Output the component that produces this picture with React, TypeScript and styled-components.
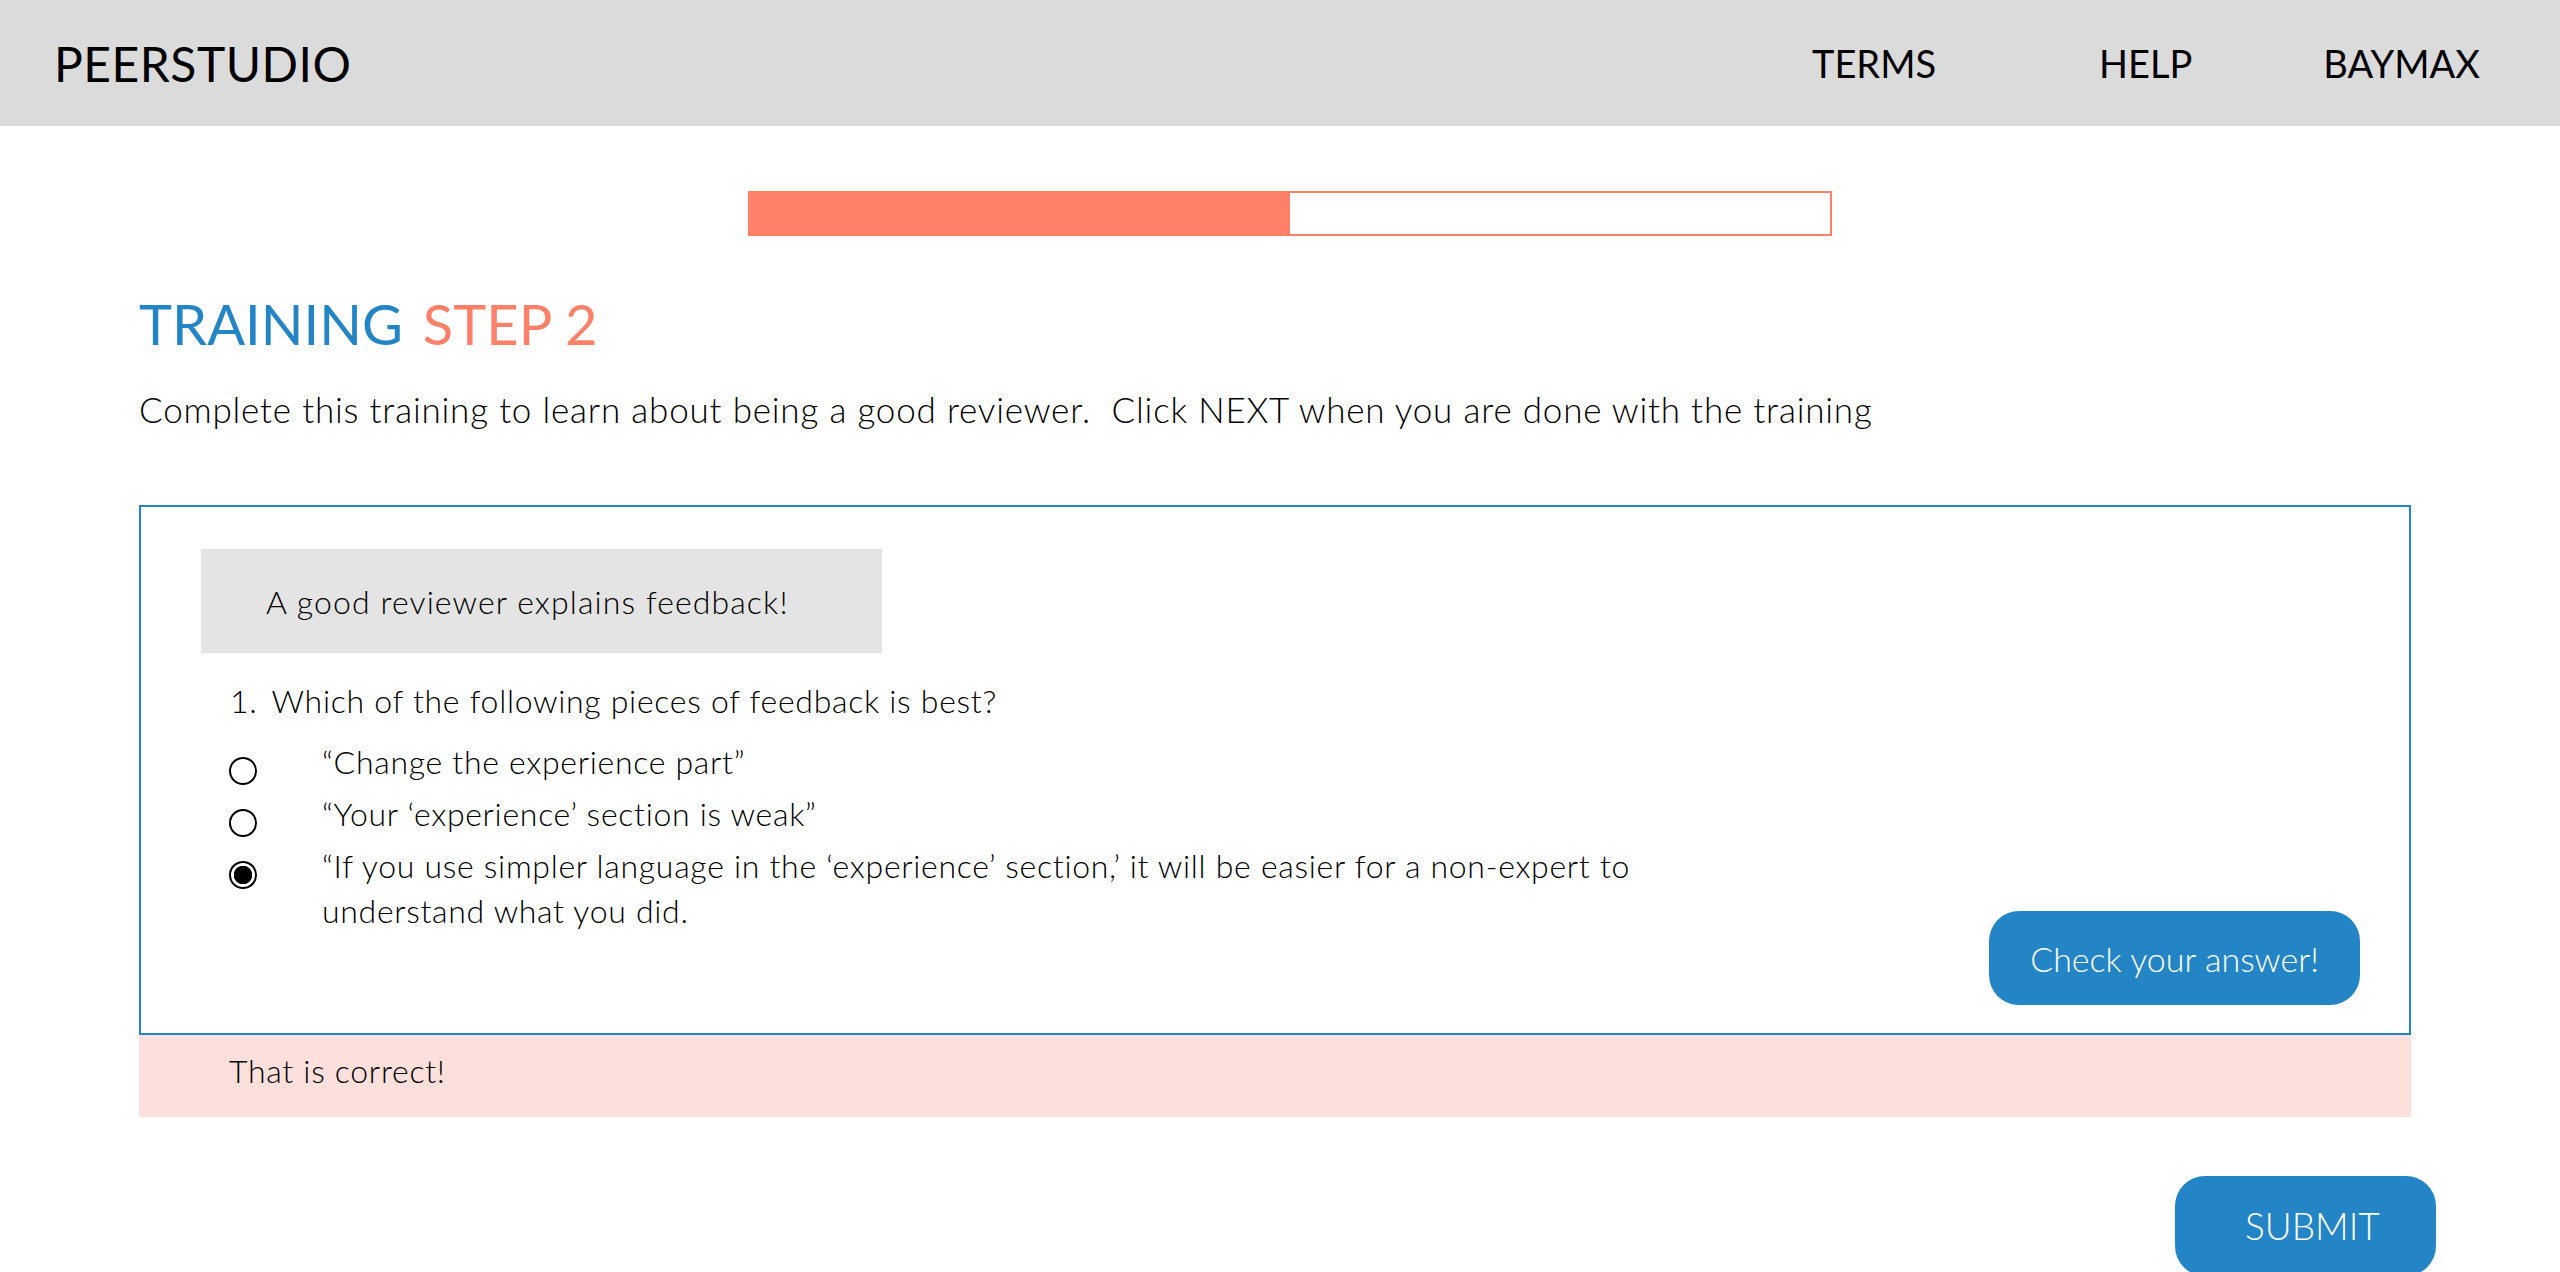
import React from "react";
import styled, { createGlobalStyle } from "styled-components";

const BLUE = "#2385c6";
const SALMON = "#ff8068";

const GlobalStyle = createGlobalStyle`
  html, body {
    margin: 0;
    padding: 0;
    background: #ffffff;
    font-family: "Lato", "Liberation Sans", sans-serif;
    color: #000;
  }
  * { box-sizing: border-box; }
`;

const Page = styled.div`
  width: 2560px;
  min-height: 1272px;
  display: flex;
  flex-direction: column;
`;

const TopBar = styled.header`
  height: 126px;
  background: #dbdbdb;
  display: flex;
  align-items: center;
  justify-content: space-between;
  padding: 0 80px 0 54px;
`;

const Brand = styled.div`
  font-family: "Lato", sans-serif;
  font-weight: 400;
  font-size: 48px;
  letter-spacing: 0.5px;
`;

const Nav = styled.nav`
  display: flex;
  align-items: center;
`;

const NavItem = styled.a<{ $space: number }>`
  font-family: "Lato", sans-serif;
  font-weight: 400;
  font-size: 38px;
  color: #000;
  text-decoration: none;
  margin-left: ${(p) => p.$space}px;
`;

const Main = styled.main`
  display: flex;
  flex-direction: column;
  padding: 65px 124px 0 139px;
`;

const Progress = styled.div`
  width: 1084px;
  height: 45px;
  margin-left: 609px;
  border: 2px solid ${SALMON};
  display: flex;
`;

const ProgressFill = styled.div`
  background: ${SALMON};
  height: 100%;
`;

const Title = styled.h1`
  margin: 54px 0 0;
  font-size: 56px;
  font-weight: 400;
  line-height: 1.2;
  display: flex;
`;

const TitleWord = styled.span<{ $color: string; $gap?: number }>`
  color: ${(p) => p.$color};
  margin-left: ${(p) => p.$gap ?? 0}px;
`;

const Lead = styled.p`
  margin: 31px 0 0;
  font-size: 35px;
  font-weight: 300;
  line-height: 1.2;
  letter-spacing: 0.8px;
`;

const Card = styled.section`
  margin: 75px 25px 0 0;
  border: 2px solid ${BLUE};
  padding: 42px 49px 28px 60px;
  display: flex;
  flex-direction: column;
  align-items: flex-start;
`;

const Banner = styled.div`
  width: 681px;
  height: 104px;
  background: #e4e4e4;
  display: flex;
  align-items: center;
  padding-left: 65px;
  font-size: 32px;
  font-weight: 300;
  letter-spacing: 1.1px;
`;

const Question = styled.ol`
  margin: 26px 0 0;
  padding: 0 0 0 29px;
  list-style: none;
  font-size: 32px;
  font-weight: 300;
  line-height: 43px;
  letter-spacing: 0.7px;
  display: flex;
  gap: 14px;
`;

const QuestionNumber = styled.span``;

const AnswerRow = styled.div`
  margin-top: 17px;
  align-self: stretch;
  display: flex;
  align-items: flex-end;
  justify-content: space-between;
`;

const Options = styled.div`
  display: flex;
  flex-direction: column;
  gap: 6px;
  padding: 0 0 72px 28px;
`;

const Option = styled.label`
  display: flex;
  align-items: flex-start;
  gap: 65px;
  font-size: 32px;
  font-weight: 300;
  line-height: 45px;
  letter-spacing: 0.7px;
`;

const Radio = styled.span<{ $checked?: boolean }>`
  flex: 0 0 auto;
  width: 28px;
  height: 28px;
  margin-top: 18px;
  border-radius: 50%;
  border: 2px solid #000;
  background: ${(p) =>
    p.$checked
      ? "radial-gradient(circle, #000 0 9px, #fff 9.5px)"
      : "#fff"};
`;

const OptionText = styled.span`
  width: 1380px;
`;

const PillButton = styled.button<{ $w: number; $h: number; $size: number; $padL?: number }>`
  width: ${(p) => p.$w}px;
  height: ${(p) => p.$h}px;
  border: none;
  border-radius: 30px;
  background: ${BLUE};
  color: #fff;
  font-family: "Lato", sans-serif;
  font-weight: 300;
  font-size: ${(p) => p.$size}px;
  display: flex;
  align-items: center;
  justify-content: ${(p) => (p.$padL ? "flex-start" : "center")};
  padding: 0 0 0 ${(p) => p.$padL ?? 0}px;
  cursor: pointer;
  flex: 0 0 auto;
`;

const Feedback = styled.div`
  margin-right: 25px;
  background: #fddfdb;
  padding: 17px 0 26px 90px;
  font-size: 32px;
  font-weight: 300;
  line-height: 1.2;
  letter-spacing: 0.7px;
`;

const Footer = styled.div`
  display: flex;
  justify-content: flex-end;
  margin-top: 59px;
`;

const options = [
  { text: "“Change the experience part”", checked: false },
  { text: "“Your ‘experience’ section is weak”", checked: false },
  {
    text: "“If you use simpler language in the ‘experience’ section,’ it will be easier for a non-expert to understand what you did.",
    checked: true,
  },
];

export default function App() {
  return (
    <Page>
      <GlobalStyle />
      <TopBar>
        <Brand>PEERSTUDIO</Brand>
        <Nav>
          <NavItem $space={0}>TERMS</NavItem>
          <NavItem $space={163}>HELP</NavItem>
          <NavItem $space={131}>BAYMAX</NavItem>
        </Nav>
      </TopBar>
      <Main>
        <Progress>
          <ProgressFill style={{ width: "50%" }} />
        </Progress>
        <Title>
          <TitleWord $color={BLUE}>TRAINING</TitleWord>
          <TitleWord $color={SALMON} $gap={20}>STEP 2</TitleWord>
        </Title>
        <Lead>
          Complete this training to learn about being a good reviewer.&nbsp; Click NEXT when you are done with the training
        </Lead>
        <Card>
          <Banner>A good reviewer explains feedback!</Banner>
          <Question>
            <QuestionNumber>1.</QuestionNumber>
            <span>Which of the following pieces of feedback is best?</span>
          </Question>
          <AnswerRow>
            <Options>
              {options.map((o, i) => (
                <Option key={i}>
                  <Radio $checked={o.checked} />
                  <OptionText>{o.text}</OptionText>
                </Option>
              ))}
            </Options>
            <PillButton $w={371} $h={94} $size={34}>Check your answer!</PillButton>
          </AnswerRow>
        </Card>
        <Feedback>That is correct!</Feedback>
        <Footer>
          <PillButton $w={261} $h={100} $size={37} $padL={70}>SUBMIT</PillButton>
        </Footer>
      </Main>
    </Page>
  );
}
